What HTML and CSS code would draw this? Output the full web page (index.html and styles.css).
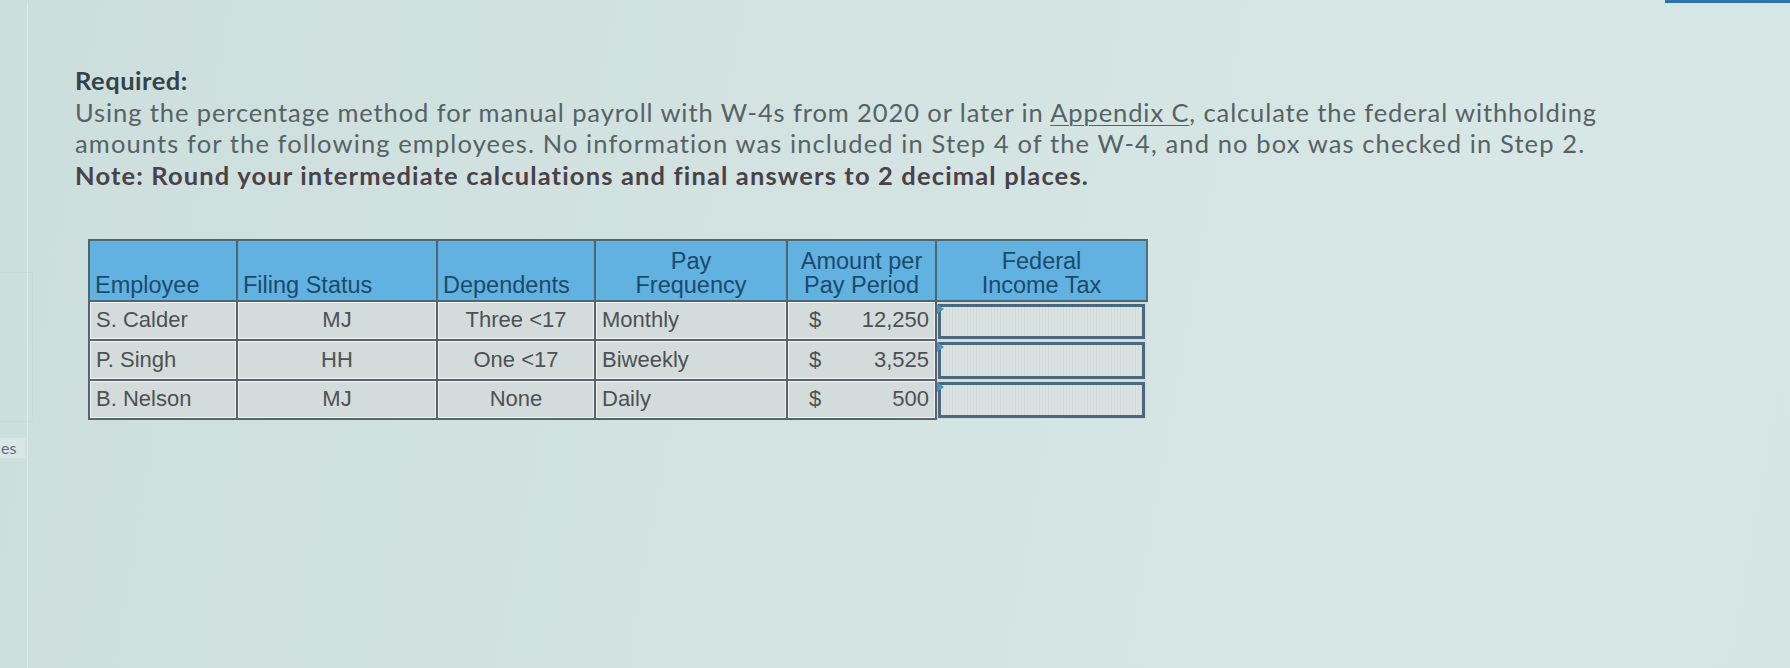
FILE: index.html
```html
<!DOCTYPE html>
<html lang="en">
<head>
<meta charset="utf-8">
<title>Required</title>
<link rel="stylesheet" href="styles.css">
</head>
<body>
<div class="screen">
  <div class="topstrip"><span class="tab"></span></div>
  <div class="page">
    <aside class="side">
      <div class="side-box"></div>
      <div class="side-label">es</div>
    </aside>
    <main class="content">
      <div class="question">
        <div class="req">Required:</div>
        <div class="text">Using the percentage method for manual payroll with W-4s from 2020 or later in <a class="link" href="#">Appendix C</a>, calculate the federal withholding<br><span class="wide">amounts for the following employees. No information was included in Step 4 of the W-4, and no box was checked in Step 2.</span></div>
        <div class="note">Note: Round your intermediate calculations and final answers to 2 decimal places.</div>
      </div>

      <table class="grid">
        <colgroup>
          <col class="c1"><col class="c2"><col class="c3"><col class="c4"><col class="c5"><col class="c6">
        </colgroup>
        <thead>
          <tr>
            <th class="left">Employee</th>
            <th class="left">Filing Status</th>
            <th class="left">Dependents</th>
            <th class="center">Pay<br>Frequency</th>
            <th class="center">Amount per<br>Pay Period</th>
            <th class="center">Federal<br>Income Tax</th>
          </tr>
        </thead>
        <tbody>
          <tr class="r1">
            <td class="left">S. Calder</td>
            <td class="center">MJ</td>
            <td class="center">Three &lt;17</td>
            <td class="left">Monthly</td>
            <td class="amt"><span class="amt-in"><span>$</span><span>12,250</span></span></td>
            <td class="inp"><div class="box"><span class="flag"></span></div></td>
          </tr>
          <tr class="r2">
            <td class="left">P. Singh</td>
            <td class="center">HH</td>
            <td class="center">One &lt;17</td>
            <td class="left">Biweekly</td>
            <td class="amt"><span class="amt-in"><span>$</span><span>3,525</span></span></td>
            <td class="inp"><div class="box"><span class="flag"></span></div></td>
          </tr>
          <tr class="r3">
            <td class="left">B. Nelson</td>
            <td class="center">MJ</td>
            <td class="center">None</td>
            <td class="left">Daily</td>
            <td class="amt"><span class="amt-in"><span>$</span><span>500</span></span></td>
            <td class="inp"><div class="box"><span class="flag"></span></div></td>
          </tr>
        </tbody>
      </table>
    </main>
  </div>
</div>
</body>
</html>
```
FILE: styles.css
```css
html, body {
  margin: 0;
  padding: 0;
}
body {
  width: 1790px;
  height: 668px;
  overflow: hidden;
  background: linear-gradient(100deg, #cddfdc 0%, #d2e3e1 45%, #d7e7e5 80%, #d5e5e3 100%);
  font-family: "Lato", "Open Sans", sans-serif;
}
.screen {
  display: flex;
  flex-direction: column;
  height: 668px;
}
.topstrip {
  height: 3px;
  display: flex;
  justify-content: flex-end;
}
.tab {
  width: 125px;
  height: 3px;
  background: #2f72ad;
}
.page {
  display: flex;
  flex: 1;
}
.side {
  width: 27px;
  border-right: 1px solid rgba(236, 245, 244, 0.5);
  display: flex;
  flex-direction: column;
}
.side-box {
  margin-top: 269px;
  height: 150px;
  width: 33px;
  border: 1px solid rgba(196, 210, 209, 0.45);
  border-left: none;
  box-sizing: border-box;
}
.side-label {
  margin-top: 16px;
  width: 24px;
  padding-left: 1px;
  font-family: "Lato", sans-serif;
  font-size: 16px;
  line-height: 20px;
  color: #5d6e7c;
  background: rgba(230, 240, 240, 0.45);
}
.content {
  padding-left: 47px;
  padding-top: 62px;
}
.question {
  font-size: 25.5px;
  line-height: 31.7px;
  color: #566265;
  letter-spacing: 0.9px;
}
.req {
  font-weight: 700;
  color: #34434a;
  letter-spacing: 0.5px;
}
.text {
  white-space: nowrap;
}
.wide {
  letter-spacing: 1.12px;
}
.link {
  color: #566265;
  text-decoration: underline;
  text-underline-offset: 3px;
  text-decoration-thickness: 1px;
}
.note {
  font-weight: 700;
  color: #4a4149;
  white-space: nowrap;
  letter-spacing: 1.15px;
}

.grid {
  margin-top: 47px;
  margin-left: 13px;
  border-collapse: collapse;
  width: 1058px;
  table-layout: fixed;
  font-family: "Liberation Sans", Arial, sans-serif;
  font-size: 22px;
}
.c1 { width: 148px; }
.c2 { width: 200px; }
.c3 { width: 158px; }
.c4 { width: 192px; }
.c5 { width: 149px; }
.c6 { width: 211px; }

.grid th {
  background: #61b1e1;
  color: #1c4a6a;
  font-weight: 400;
  font-size: 23.5px;
  height: 61px;
  box-sizing: border-box;
  vertical-align: bottom;
  padding: 0 5px 3px;
  line-height: 24px;
  border: 2px solid #4f6570;
}
.grid th:last-child {
  border-right-color: #4f6f84;
}
.grid td {
  background: #d4dcdb;
  color: #4c5153;
  height: 39px;
  box-sizing: border-box;
  padding: 0 6px;
  line-height: 24px;
  border: 2px solid #59646a;
  box-shadow: inset 0 0 0 1px rgba(245, 250, 250, 0.75);
  white-space: nowrap;
}
.grid tr.r2 td { height: 40px; }
.left { text-align: left; }
.center { text-align: center; }
.amt-in {
  display: flex;
  justify-content: space-between;
  padding-left: 15px;
}
.grid td.inp {
  padding: 2px 2px 1px 1px;
  background: #d4dcdb;
  box-shadow: none;
  border-left: 2px solid #59646a;
  border-right: none;
  border-top: none;
  border-bottom: none;
}
.box {
  position: relative;
  height: 100%;
  box-sizing: border-box;
  border: 3px solid #4a687e;
  background: repeating-linear-gradient(90deg, #dbe3e2 0 2px, #d3dcdb 2px 3px);
}
.flag {
  position: absolute;
  left: -4px;
  top: -3px;
  width: 0;
  height: 0;
  border-top: 5px solid transparent;
  border-bottom: 5px solid transparent;
  border-left: 7px solid #4a8fc6;
}
```
